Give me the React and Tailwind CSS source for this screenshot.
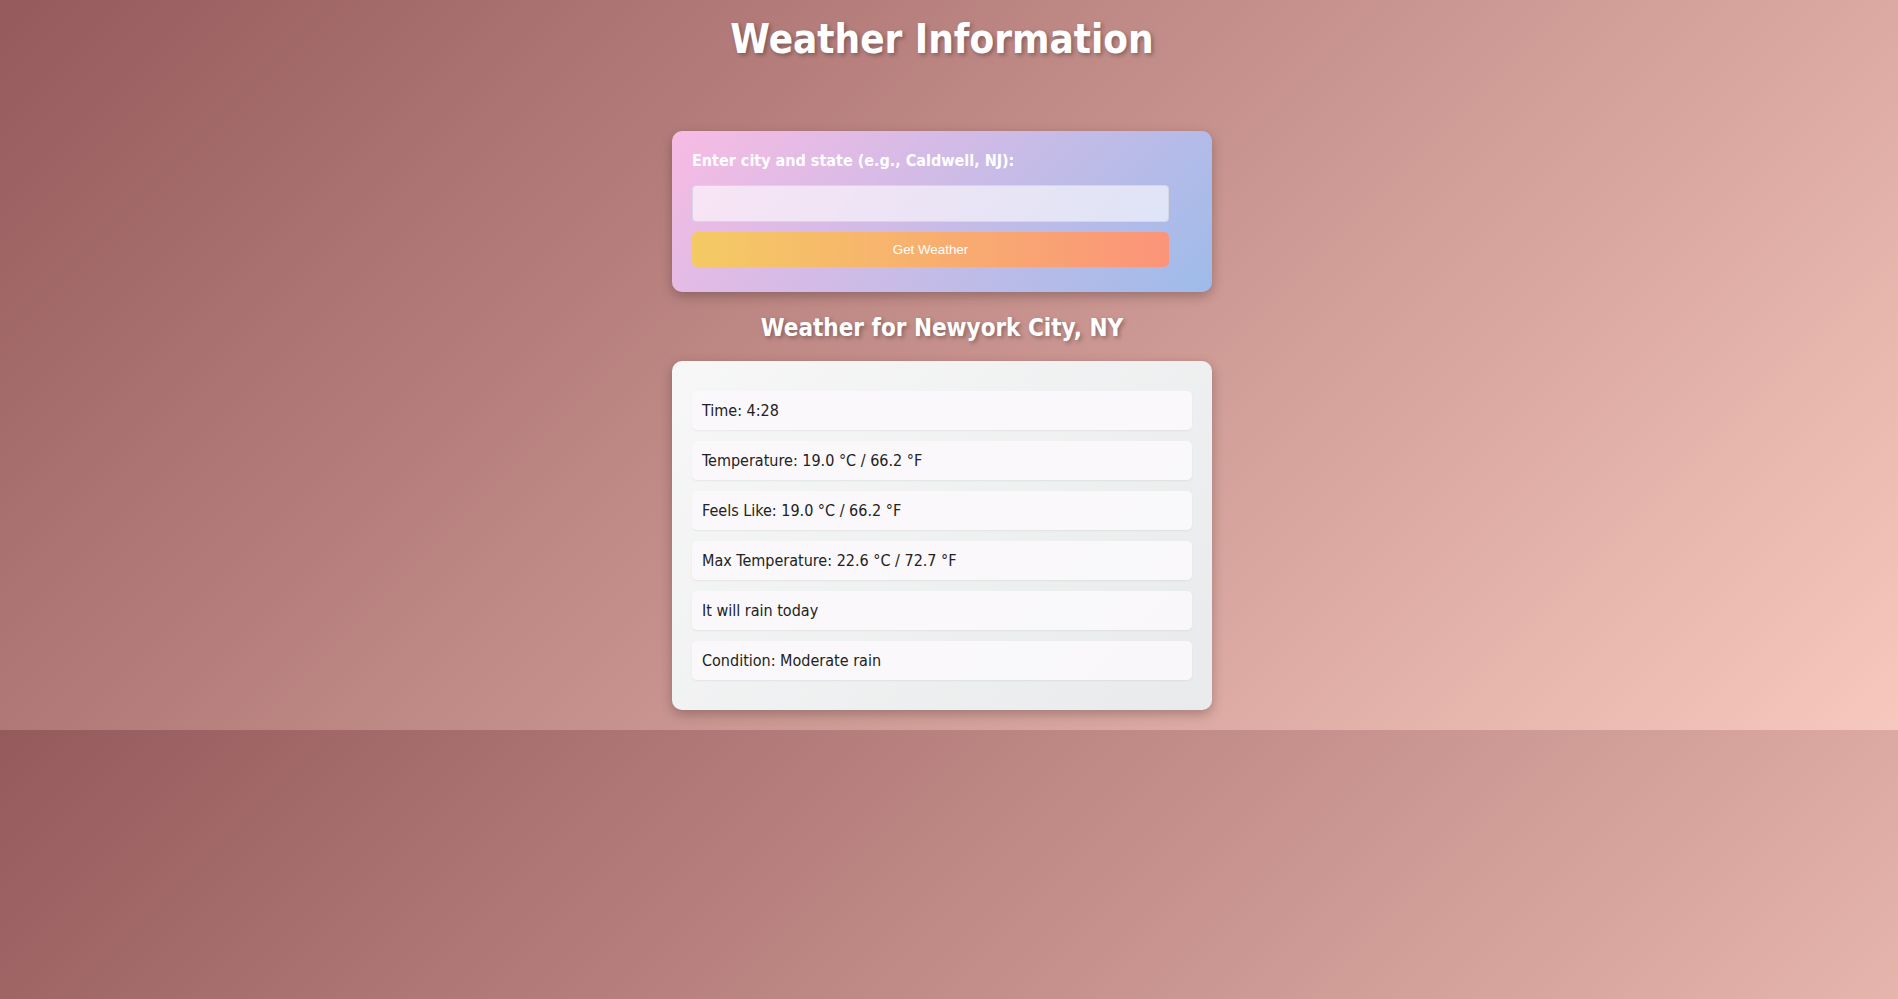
import React, { useState } from "react";

const weatherRows = [
  "Time: 4:28",
  "Temperature: 19.0 °C / 66.2 °F",
  "Feels Like: 19.0 °C / 66.2 °F",
  "Max Temperature: 22.6 °C / 72.7 °F",
  "It will rain today",
  "Condition: Moderate rain",
];

const App = () => {
  const [city, setCity] = useState("");

  return (
    <div className="min-h-screen w-full bg-[linear-gradient(135deg,#955a5c,#f7c8bd)] bg-[length:100%_730px] bg-repeat font-['DejaVu_Sans_Condensed','DejaVu_Sans',sans-serif] [font-stretch:condensed]">
      <div className="flex flex-col items-center pt-[15px] pr-[14px]">
        <h1 className="text-[40px] font-bold leading-[48px] text-white [text-shadow:2px_2px_4px_rgba(0,0,0,0.3)]">
          Weather Information
        </h1>

        {/* search card */}
        <div className="mt-[68px] w-[540px] rounded-[10px] bg-[linear-gradient(135deg,#f8bbe4,#9ebbea)] px-[20px] pt-[20px] pb-[25px] shadow-[0_4px_12px_rgba(0,0,0,0.25)]">
          <label className="block text-[16px] font-bold leading-[19px] text-white">
            Enter city and state (e.g., Caldwell, NJ):
          </label>
          <input
            type="text"
            value={city}
            onChange={(e) => setCity(e.target.value)}
            className="mt-[15px] block h-[37px] w-[477px] rounded-[4px] border border-[#d6d6de] bg-white/60 px-2 outline-none"
          />
          <button className="mt-[10px] block h-[35px] w-[477px] rounded-[5px] bg-[linear-gradient(90deg,#f4ca64,#fb9479)] font-['Liberation_Sans',Arial,sans-serif] text-[13.33px] text-white [font-stretch:normal]">
            Get Weather
          </button>
        </div>

        <h2 className="mt-[22px] text-[24px] font-bold leading-[29px] text-white [text-shadow:2px_2px_4px_rgba(0,0,0,0.3)]">
          Weather for Newyork City, NY
        </h2>

        {/* results card */}
        <div className="mt-[18px] w-[540px] rounded-[10px] bg-[linear-gradient(135deg,#f7f7f7,#e8eaeb)] px-[20px] pt-[30px] pb-[30px] shadow-[0_4px_12px_rgba(0,0,0,0.25)]">
          <ul className="flex flex-col gap-[11px]">
            {weatherRows.map((row, index) => (
              <li
                key={index}
                className="rounded-[5px] bg-[#fbf8fb]/90 px-[10px] py-[10px] text-[16px] leading-[19px] text-[#222] shadow-[0_1px_2px_rgba(0,0,0,0.06)]"
              >
                {row}
              </li>
            ))}
          </ul>
        </div>
      </div>
    </div>
  );
};

export default App;
